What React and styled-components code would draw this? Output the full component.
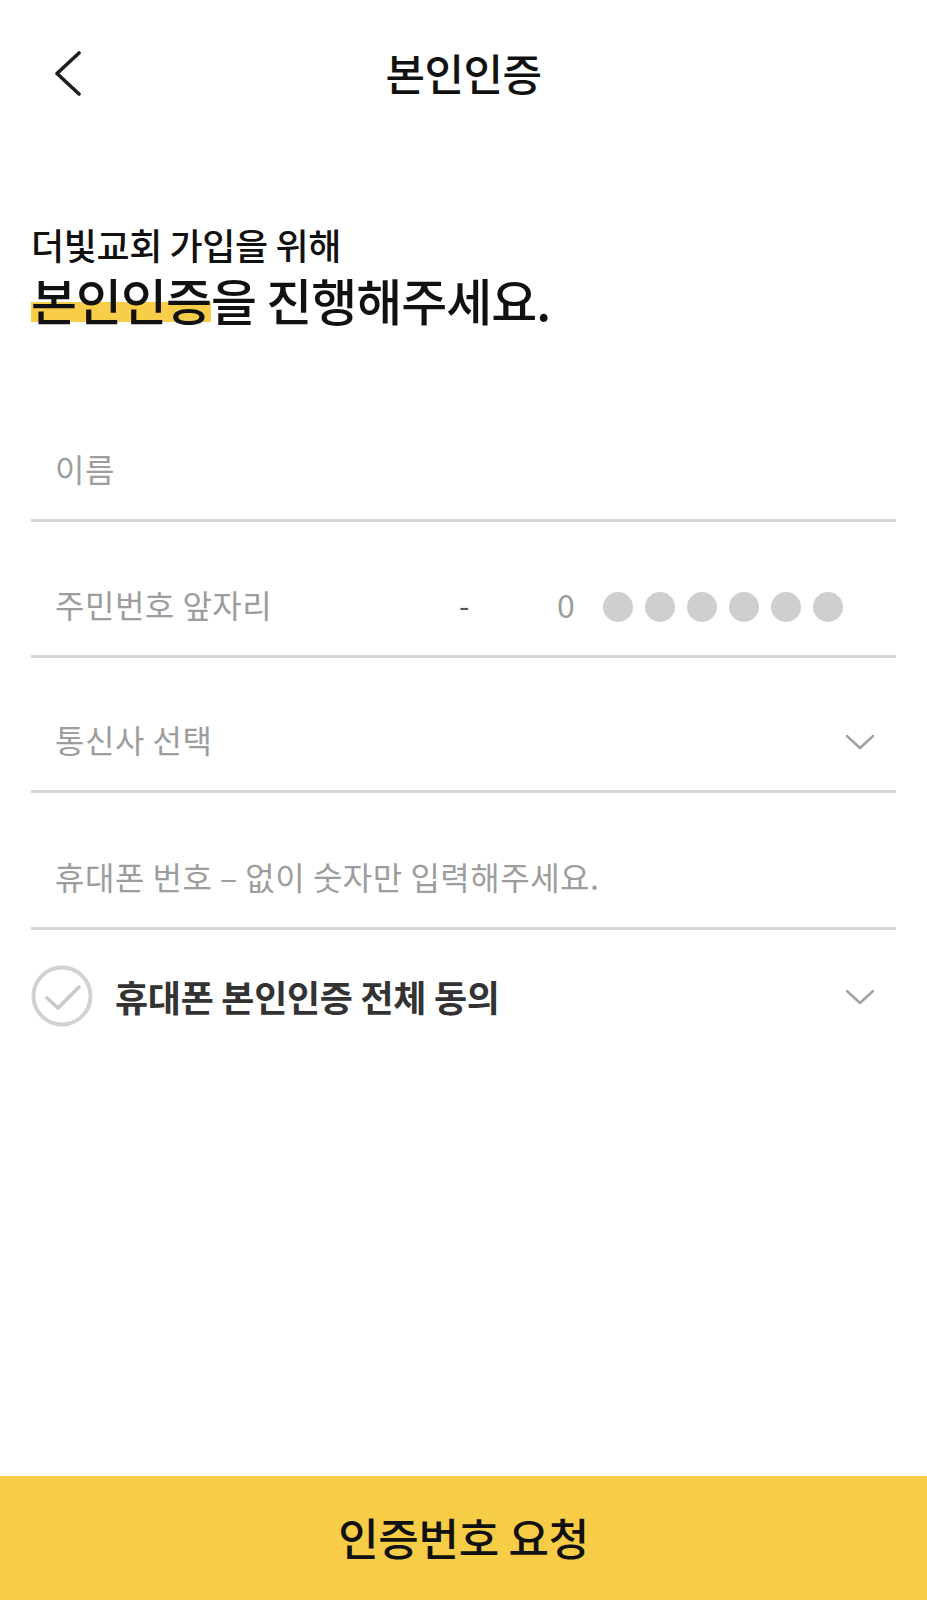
import React from "react";
import styled, { createGlobalStyle } from "styled-components";

const GlobalStyle = createGlobalStyle`
  html, body { margin: 0; padding: 0; background: #fff; }
  body {
    font-family: "Noto Sans CJK KR", "Noto Sans", sans-serif;
    -webkit-font-smoothing: antialiased;
  }
  * { box-sizing: border-box; }
`;

const Page = styled.div`
  min-height: 100vh;
  display: flex;
  flex-direction: column;
  background: #fff;
`;

const Header = styled.header`
  height: 144px;
  display: grid;
  grid-template-columns: 1fr auto 1fr;
  align-items: center;
`;

const BackButton = styled.button`
  justify-self: start;
  margin-left: 54px;
  margin-top: 2px;
  padding: 0;
  border: 0;
  background: none;
  display: flex;
  cursor: pointer;
`;

const Title = styled.h1`
  margin: 0;
  font-size: 43px;
  font-weight: 500;
  letter-spacing: -0.5px;
  line-height: 50px;
  color: #111;
`;

const Intro = styled.section`
  padding: 80px 31px 0;
`;

const SubHeading = styled.p`
  margin: 0;
  font-size: 36px;
  font-weight: 500;
  letter-spacing: -0.4px;
  line-height: 40px;
  color: #111;
`;

const Heading = styled.h2`
  margin: 6px 0 0;
  font-size: 50px;
  font-weight: 500;
  letter-spacing: -1px;
  line-height: 58px;
  color: #111;
`;

const Mark = styled.span`
  display: inline-block;
  background: linear-gradient(
    to bottom,
    transparent 56%,
    #f7cd4a 56%,
    #f7cd4a 90%,
    transparent 90%
  );
`;

const Form = styled.div`
  margin-top: 58px;
  padding: 0 31px;
  display: flex;
  flex-direction: column;
`;

const Field = styled.div`
  height: ${(p) => p.$h || 136}px;
  border-bottom: 3px solid #d6d6d6;
  display: flex;
  align-items: flex-end;
  padding: 0 21px 31px 24px;
`;

const Placeholder = styled.span`
  flex: ${(p) => (p.$grow ? 1 : "none")};
  font-size: 32px;
  font-weight: 400;
  letter-spacing: 0.5px;
  line-height: 40px;
  color: #9d9d9d;
`;

const IdGrid = styled.div`
  flex: 1;
  display: grid;
  grid-template-columns: 404px 98px auto;
  align-items: center;
`;

const Dash = styled.span`
  font-size: 30px;
  line-height: 40px;
  color: #555;
`;

const Masked = styled.div`
  display: flex;
  align-items: center;
  gap: 12px;
`;

const Digit = styled.span`
  font-size: 32px;
  line-height: 40px;
  color: #9d9d9d;
  margin-right: 16px;
`;

const Dot = styled.span`
  width: 30px;
  height: 30px;
  margin-top: 6px;
  border-radius: 50%;
  background: #cfcfcf;
`;

const ChevronWrap = styled.span`
  display: flex;
  align-items: center;
  height: 40px;
  padding-top: ${(p) => p.$offset || 0}px;
`;

const AgreeRow = styled.div`
  display: flex;
  align-items: center;
  padding: 35px 21px 0 0;
`;

const CheckCircle = styled.span`
  display: flex;
  width: 62px;
  height: 62px;
  margin-right: 22px;
`;

const AgreeText = styled.span`
  flex: 1;
  font-size: 36px;
  font-weight: 700;
  letter-spacing: -0.3px;
  line-height: 44px;
  color: #333;
`;

const Submit = styled.button`
  margin-top: auto;
  height: 124px;
  width: 100%;
  border: 0;
  background: #f7cd47;
  font-family: "Noto Sans CJK KR", "Noto Sans", sans-serif;
  font-size: 44px;
  font-weight: 500;
  letter-spacing: -0.3px;
  color: #111;
  display: flex;
  align-items: center;
  justify-content: center;
  padding: 0 0 2px;
  cursor: pointer;
`;

const Chevron = () => (
  <svg width="30" height="16" viewBox="0 0 30 16" fill="none">
    <polyline
      points="2,2 15,14 28,2"
      stroke="#a0a0a0"
      strokeWidth="2.4"
      strokeLinecap="round"
      strokeLinejoin="round"
    />
  </svg>
);

export default function App() {
  return (
    <Page>
      <GlobalStyle />
      <Header>
        <BackButton aria-label="뒤로">
          <svg width="28" height="45" viewBox="0 0 28 45" fill="none">
            <polyline
              points="25,2 3,22.5 25,43"
              stroke="#1e1e1e"
              strokeWidth="3.6"
              strokeLinecap="round"
              strokeLinejoin="round"
            />
          </svg>
        </BackButton>
        <Title>본인인증</Title>
        <span />
      </Header>

      <Intro>
        <SubHeading>더빛교회 가입을 위해</SubHeading>
        <Heading>
          <Mark>본인인증</Mark>을 진행해주세요.
        </Heading>
      </Intro>

      <Form>
        <Field>
          <Placeholder $grow>이름</Placeholder>
        </Field>
        <Field>
          <IdGrid>
            <Placeholder>주민번호 앞자리</Placeholder>
            <Dash>-</Dash>
            <Masked>
              <Digit>0</Digit>
              {Array.from({ length: 6 }).map((_, i) => (
                <Dot key={i} />
              ))}
            </Masked>
          </IdGrid>
        </Field>
        <Field $h={135}>
          <Placeholder $grow>통신사 선택</Placeholder>
          <ChevronWrap $offset={6}>
            <Chevron />
          </ChevronWrap>
        </Field>
        <Field $h={137}>
          <Placeholder $grow>휴대폰 번호 – 없이 숫자만 입력해주세요.</Placeholder>
        </Field>
        <AgreeRow>
          <CheckCircle>
            <svg width="62" height="62" viewBox="0 0 62 62" fill="none">
              <circle cx="31" cy="31" r="28.5" stroke="#d2d2d2" strokeWidth="4" />
              <polyline
                points="16,33 27,43 48,22"
                stroke="#c9c9c9"
                strokeWidth="3.6"
                strokeLinecap="round"
                strokeLinejoin="round"
              />
            </svg>
          </CheckCircle>
          <AgreeText>휴대폰 본인인증 전체 동의</AgreeText>
          <ChevronWrap $offset={2}>
            <Chevron />
          </ChevronWrap>
        </AgreeRow>
      </Form>

      <Submit>인증번호 요청</Submit>
    </Page>
  );
}
